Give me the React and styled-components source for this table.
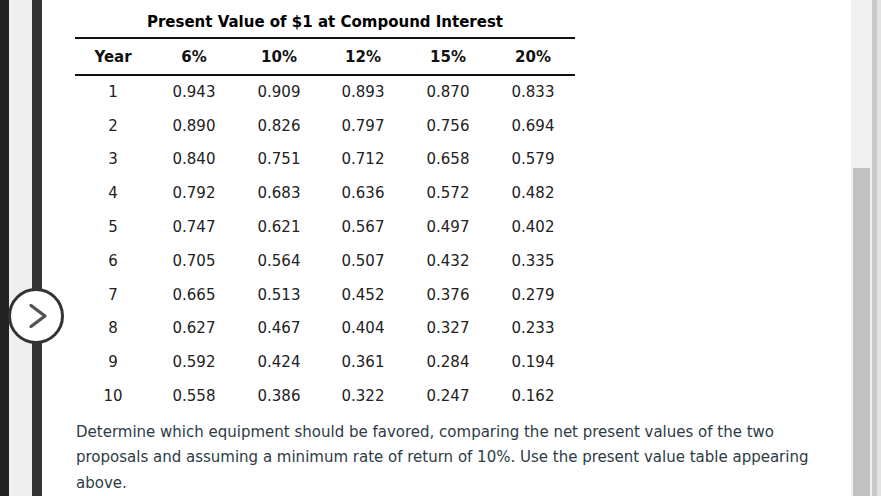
import React from "react";
import styled, { createGlobalStyle } from "styled-components";

const GlobalStyle = createGlobalStyle`
  html, body {
    margin: 0;
    padding: 0;
    background: #fff;
  }
  body {
    font-family: "DejaVu Sans", Verdana, sans-serif;
  }
`;

const rates = ["6%", "10%", "12%", "15%", "20%"];
const widths = [76, 86, 84, 84, 86, 84];

const rows = [
  ["0.943", "0.909", "0.893", "0.870", "0.833"],
  ["0.890", "0.826", "0.797", "0.756", "0.694"],
  ["0.840", "0.751", "0.712", "0.658", "0.579"],
  ["0.792", "0.683", "0.636", "0.572", "0.482"],
  ["0.747", "0.621", "0.567", "0.497", "0.402"],
  ["0.705", "0.564", "0.507", "0.432", "0.335"],
  ["0.665", "0.513", "0.452", "0.376", "0.279"],
  ["0.627", "0.467", "0.404", "0.327", "0.233"],
  ["0.592", "0.424", "0.361", "0.284", "0.194"],
  ["0.558", "0.386", "0.322", "0.247", "0.162"],
];

export default function App() {
  return (
    <>
      <GlobalStyle />
      <Page>
        <LeftRail>
          <Stripe $w={9} $color="#222" />
          <Stripe $w={23} $color="#efefef" />
          <Stripe $w={10} $color="#333" />
        </LeftRail>

        <Content>
          <Table>
            <Caption>Present Value of $1 at Compound Interest</Caption>
            <colgroup>
              {widths.map((w, i) => (
                <col key={i} style={{ width: w }} />
              ))}
            </colgroup>
            <thead>
              <HeadRow>
                <Th>Year</Th>
                {rates.map((r) => (
                  <Th key={r}>{r}</Th>
                ))}
              </HeadRow>
            </thead>
            <tbody>
              {rows.map((vals, i) => (
                <Row key={i}>
                  <Td>{i + 1}</Td>
                  {vals.map((v, j) => (
                    <Td key={j}>{v}</Td>
                  ))}
                </Row>
              ))}
            </tbody>
          </Table>
          <Paragraph>
            Determine which equipment should be favored, comparing the net present values of the
            two proposals and assuming a minimum rate of return of 10%. Use the present value
            table appearing above.
          </Paragraph>
        </Content>

        <ScrollArea>
          <Track>
            <Thumb />
          </Track>
          <Stripe $w={5} $color="#c8c8c8" />
          <Stripe $w={4} $color="#e2e2e2" />
        </ScrollArea>

        <NextButton aria-label="Next">
          <svg width="20" height="26" viewBox="0 0 20 26">
            <path
              d="M3 2.5 L17 13 L3 23.5"
              fill="none"
              stroke="#555"
              strokeWidth="3.4"
              strokeLinecap="round"
              strokeLinejoin="round"
            />
          </svg>
        </NextButton>
      </Page>
    </>
  );
}

const Page = styled.div`
  position: relative;
  display: flex;
  width: 881px;
  height: 496px;
  overflow: hidden;
  background: #fff;
`;

const LeftRail = styled.div`
  display: flex;
  flex: none;
  height: 100%;
`;

const Stripe = styled.div`
  flex: none;
  width: ${(p) => p.$w}px;
  height: 100%;
  background: ${(p) => p.$color};
`;

const Content = styled.div`
  flex: 1;
  min-width: 0;
  padding: 13px 30px 0 33px;
  color: #2d3b45;
`;

const Table = styled.table`
  width: 500px;
  border-collapse: collapse;
  table-layout: fixed;
  font-size: 15px;
`;

const Caption = styled.caption`
  font-weight: bold;
  font-size: 15px;
  line-height: 19px;
  color: #000;
  padding-bottom: 5px;
  text-align: center;
`;

const HeadRow = styled.tr`
  height: 37px;
  border-top: 2px solid #111;
  border-bottom: 2px solid #111;
`;

const Th = styled.th`
  padding: 0;
  font-weight: bold;
  color: #111;
  text-align: center;
`;

const Row = styled.tr`
  height: 33.8px;
`;

const Td = styled.td`
  padding: 0;
  text-align: center;
  color: #222;
`;

const Paragraph = styled.p`
  margin: 7px 0 0 1px;
  font-size: 15px;
  line-height: 25.5px;
  color: #2d3b45;
`;

const ScrollArea = styled.div`
  display: flex;
  flex: none;
  height: 100%;
`;

const Track = styled.div`
  flex: none;
  width: 21px;
  height: 100%;
  background: #f0f0f0;
  padding: 168px 2px 0;
  box-sizing: border-box;
`;

const Thumb = styled.div`
  width: 17px;
  height: 100%;
  background: #c1c1c1;
`;

const NextButton = styled.button`
  position: absolute;
  left: 8px;
  top: 288px;
  width: 56px;
  height: 56px;
  box-sizing: border-box;
  border-radius: 50%;
  border: 3px solid #333;
  background: #fff;
  padding: 0 0 0 3px;
  display: flex;
  align-items: center;
  justify-content: center;
  cursor: pointer;
`;
